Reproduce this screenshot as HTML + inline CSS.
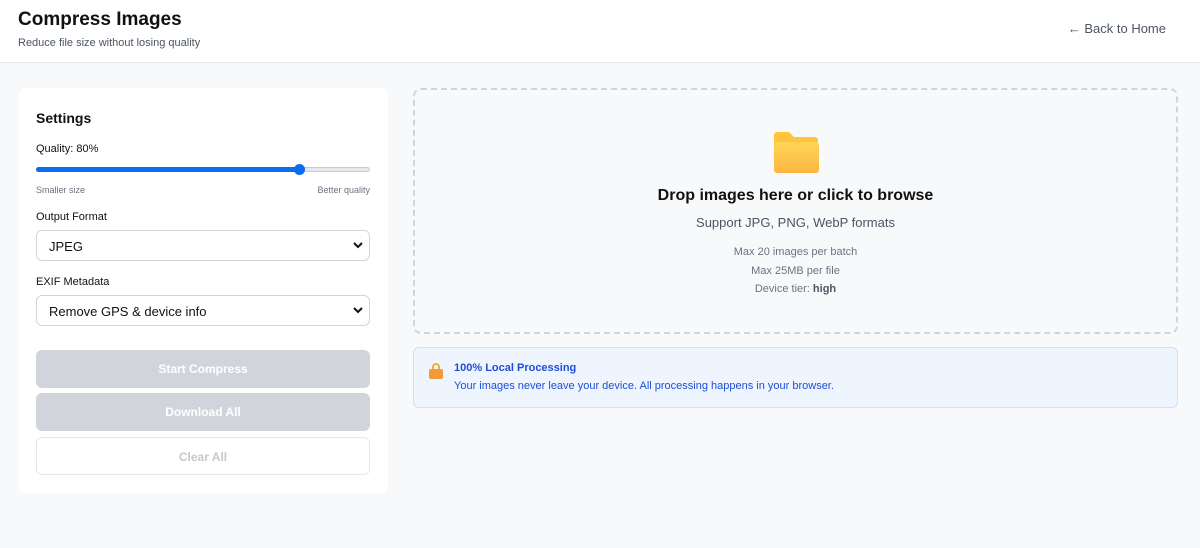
<!DOCTYPE html>
<html><head><style>
*{box-sizing:border-box;margin:0;padding:0}
body{width:1200px;height:548px;background:#f8f9fb;font-family:"Liberation Sans",sans-serif;position:relative;overflow:hidden}
.hdr{position:absolute;left:0;top:0;width:1200px;height:63px;background:#fff;border-bottom:1px solid #e5e7eb}
.hdr h1{position:absolute;left:18px;top:9px;font-size:19px;font-weight:bold;color:#111}
.hdr .sub{position:absolute;left:18px;top:37px;font-size:11px;color:#4b5563}
.hdr .back{position:absolute;right:34px;top:21px;font-size:13px;color:#4b5563}
.card{position:absolute;left:18px;top:88px;width:370px;height:406px;background:#fff;border-radius:8px}
.abs{position:absolute}
.lbl{font-size:11px;color:#111}
.sel{position:absolute;left:18px;width:334px;height:31px;border:1px solid #d1d5db;border-radius:6px;font-size:13px;color:#111;padding:8px 12px}
.sel svg{position:absolute;right:6px;top:11px}
.btn{position:absolute;left:18px;width:334px;height:38px;border-radius:6px;background:#d1d5db;color:#fff;font-weight:bold;font-size:12px;text-align:center;line-height:38px}
.drop{position:absolute;left:413px;top:88px;width:765px;height:246px;border:2px dashed #d1d5db;border-radius:8px;text-align:center}
.info{position:absolute;left:413px;top:347px;width:765px;height:61px;background:#eef5ff;border:1px solid #cfe0f7;border-radius:6px}
</style></head><body>
<div class="hdr"><h1>Compress Images</h1><div class="sub">Reduce file size without losing quality</div><div class="back">← Back to Home</div></div>
<div class="card">
<div class="abs" style="left:18px;top:22px;font-size:14px;font-weight:bold;color:#111">Settings</div>
<div class="abs lbl" style="left:18px;top:55px">Quality: 80%</div>
<div class="abs" style="left:18px;top:79px;width:334px;height:5px;border-radius:3px;background:#e5e7eb;border:1px solid #ccc"></div>
<div class="abs" style="left:18px;top:79px;width:264px;height:5px;border-radius:3px;background:#0a6cf0"></div>
<div class="abs" style="left:276px;top:76px;width:11px;height:11px;border-radius:50%;background:#0a6cf0"></div>
<div class="abs" style="left:18px;top:97px;font-size:9px;color:#6b7280">Smaller size</div>
<div class="abs" style="right:18px;top:97px;font-size:9px;color:#6b7280">Better quality</div>
<div class="abs lbl" style="left:18px;top:123px">Output Format</div>
<div class="sel" style="top:142px">JPEG<svg width="10" height="7"><path d="M1 1l4 4 4-4" stroke="#111" stroke-width="2" fill="none"/></svg></div>
<div class="abs lbl" style="left:18px;top:188px">EXIF Metadata</div>
<div class="sel" style="top:207px">Remove GPS &amp; device info<svg width="10" height="7"><path d="M1 1l4 4 4-4" stroke="#111" stroke-width="2" fill="none"/></svg></div>
<div class="btn" style="top:262px">Start Compress</div>
<div class="btn" style="top:305px">Download All</div>
<div class="btn" style="top:349px;background:#fff;border:1px solid #e5e7eb;color:#c4c8ce">Clear All</div>
</div>
<div class="drop">
<svg class="abs" style="left:357px;top:41px" width="48" height="44" viewBox="0 0 48 44"><defs><linearGradient id="g" x1="0" y1="0" x2="0" y2="1"><stop offset="0" stop-color="#ffd45a"/><stop offset="1" stop-color="#ffb640"/></linearGradient></defs><path d="M2 4a3 3 0 0 1 3-3h12l5 5h21a3 3 0 0 1 3 3v30a3 3 0 0 1-3 3H5a3 3 0 0 1-3-3z" fill="#ffc43a"/><rect x="2" y="11" width="45" height="31" rx="3" fill="url(#g)"/></svg>
<div class="abs" style="left:0;width:100%;top:97px;font-size:16px;font-weight:bold;color:#111">Drop images here or click to browse</div>
<div class="abs" style="left:0;width:100%;top:125px;font-size:13px;color:#4b5563">Support JPG, PNG, WebP formats</div>
<div class="abs" style="left:0;width:100%;top:153px;font-size:11px;color:#6b7280;line-height:18.5px">Max 20 images per batch<br>Max 25MB per file<br>Device tier: <b style="color:#4b5563">high</b></div>
</div>
<div class="info">
<div class="abs" style="left:15px;top:15px;width:14px;height:16px"><div style="position:absolute;left:3px;top:0;width:8px;height:9px;border:2px solid #f0b030;border-radius:4px 4px 0 0"></div><div style="position:absolute;left:0;top:6px;width:14px;height:10px;background:#f29a3a;border-radius:2px"></div></div>
<div class="abs" style="left:40px;top:14px;font-size:11px;font-weight:bold;color:#1d4ed8">100% Local Processing</div>
<div class="abs" style="left:40px;top:32px;font-size:11px;color:#1d4ed8">Your images never leave your device. All processing happens in your browser.</div>
</div>
</body></html>
